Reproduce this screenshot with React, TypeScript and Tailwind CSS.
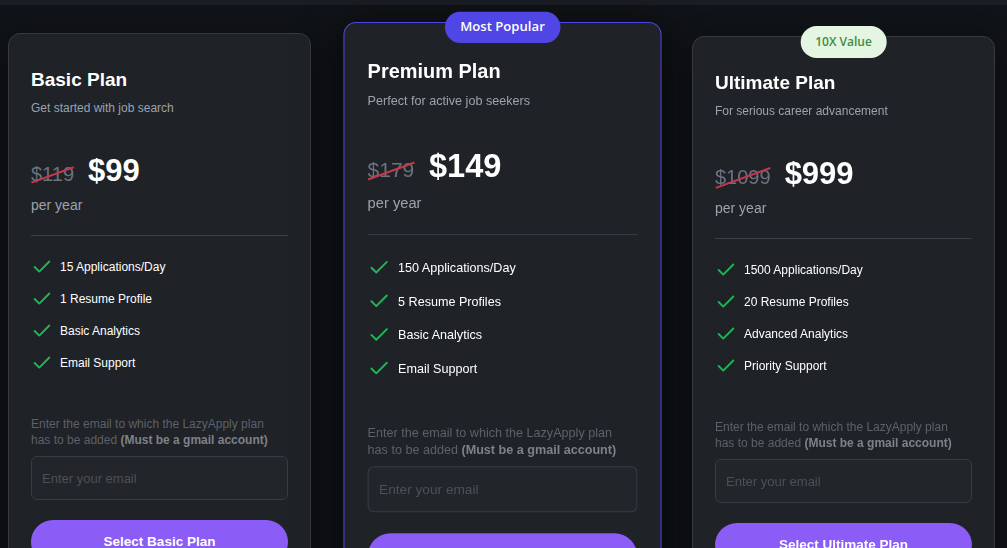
import React from "react";

type Plan = {
  name: string;
  subtitle: string;
  oldPrice: string;
  price: string;
  features: string[];
  button: string;
  badge?: "popular" | "value";
};

const plans: Plan[] = [
  {
    name: "Basic Plan",
    subtitle: "Get started with job search",
    oldPrice: "$119",
    price: "$99",
    features: ["15 Applications/Day", "1 Resume Profile", "Basic Analytics", "Email Support"],
    button: "Select Basic Plan",
  },
  {
    name: "Premium Plan",
    subtitle: "Perfect for active job seekers",
    oldPrice: "$179",
    price: "$149",
    features: ["150 Applications/Day", "5 Resume Profiles", "Basic Analytics", "Email Support"],
    button: "Select Premium Plan",
    badge: "popular",
  },
  {
    name: "Ultimate Plan",
    subtitle: "For serious career advancement",
    oldPrice: "$1099",
    price: "$999",
    features: ["1500 Applications/Day", "20 Resume Profiles", "Advanced Analytics", "Priority Support"],
    button: "Select Ultimate Plan",
    badge: "value",
  },
];

function CheckIcon() {
  return (
    <svg
      width="22"
      height="22"
      viewBox="0 0 24 24"
      fill="none"
      stroke="#22b55a"
      strokeWidth="2"
      strokeLinecap="round"
      strokeLinejoin="round"
      className="shrink-0"
    >
      <path d="M20 6 9 17l-5-5" />
    </svg>
  );
}

function Card({ plan, className }: { plan: Plan; className: string }) {
  return (
    <div
      className={
        "relative w-[303px] shrink-0 rounded-xl border bg-[#1f2226] px-[22px] pt-[32px] pb-6 " + className
      }
    >
      {plan.badge === "popular" && (
        <div className="absolute left-1/2 top-[-11px] flex h-[30px] -translate-x-1/2 items-center rounded-full bg-[#4f46e5] px-[15px] font-['Open_Sans',sans-serif] text-[12.5px] font-semibold text-white">
          Most Popular
        </div>
      )}
      {plan.badge === "value" && (
        <div className="absolute left-1/2 top-[-11px] flex h-8 -translate-x-1/2 items-center rounded-full bg-[#e4f5e2] px-[15px] font-['Open_Sans',sans-serif] text-[12px] font-semibold text-[#3d8b3f]">
          10X Value
        </div>
      )}
      <h3 className="text-[19px] font-bold leading-7 text-white">{plan.name}</h3>
      <p className="mt-[6px] text-xs leading-4 text-[#9ca3af]">{plan.subtitle}</p>
      <div className="mt-[37px] flex h-9 items-baseline gap-[14px]">
        <span className="relative text-xl leading-7 text-[#6b7280]">
          {plan.oldPrice}
          <span className="absolute left-[-1px] right-[-1px] top-1/2 h-[1.5px] -rotate-[20deg] bg-[#c03a4c]" />
        </span>
        <span className="text-[31px] font-bold leading-9 text-white">{plan.price}</span>
      </div>
      <p className="mt-[6px] text-sm leading-5 text-[#9ca3af]">per year</p>
      <div className="mt-[20px] h-px bg-[#3a3e45]" />
      <ul className="mt-[19px] flex flex-col gap-2">
        {plan.features.map((f) => (
          <li key={f} className="flex h-6 items-center gap-[7px] text-xs font-medium text-white">
            <CheckIcon />
            <span>{f}</span>
          </li>
        ))}
      </ul>
      <p className="mt-[41px] text-xs leading-4 text-[#5d6169]">
        <span className="block">Enter the email to which the LazyApply plan</span>
        <span className="block">
          has to be added <span className="font-bold text-[#7d8189]">(Must be a gmail account)</span>
        </span>
      </p>
      <input
        type="email"
        placeholder="Enter your email"
        className="mt-[8px] block h-11 w-full rounded-md border border-[#383c43] bg-[#22252a] px-[10px] text-[13px] text-white outline-none placeholder:text-[#4c5058]"
      />
      <button className="mt-5 block h-11 w-full rounded-full bg-[#8b5cf6] text-[13.5px] font-bold text-white">
        {plan.button}
      </button>
    </div>
  );
}

export default function App() {
  return (
    <div className="h-screen overflow-hidden bg-[#101317] font-['Liberation_Sans',Arial,sans-serif]">
      <div className="h-[5px] bg-[#1a1d24]" />
      <div className="flex items-start gap-10 pl-[8px]">
        <Card plan={plans[0]} className="mt-[28px] border-[#373b41] shadow-[0_8px_30px_rgba(0,0,0,0.45)]" />
        <Card
          plan={plans[1]}
          className="mt-[17px] origin-top scale-105 border-[#4f46e5] shadow-[0_10px_40px_rgba(0,0,0,0.7)]"
        />
        <Card
          plan={plans[2]}
          className="-ml-[2px] mt-[31px] border-[#373b41] shadow-[0_8px_30px_rgba(0,0,0,0.45)]"
        />
      </div>
    </div>
  );
}
